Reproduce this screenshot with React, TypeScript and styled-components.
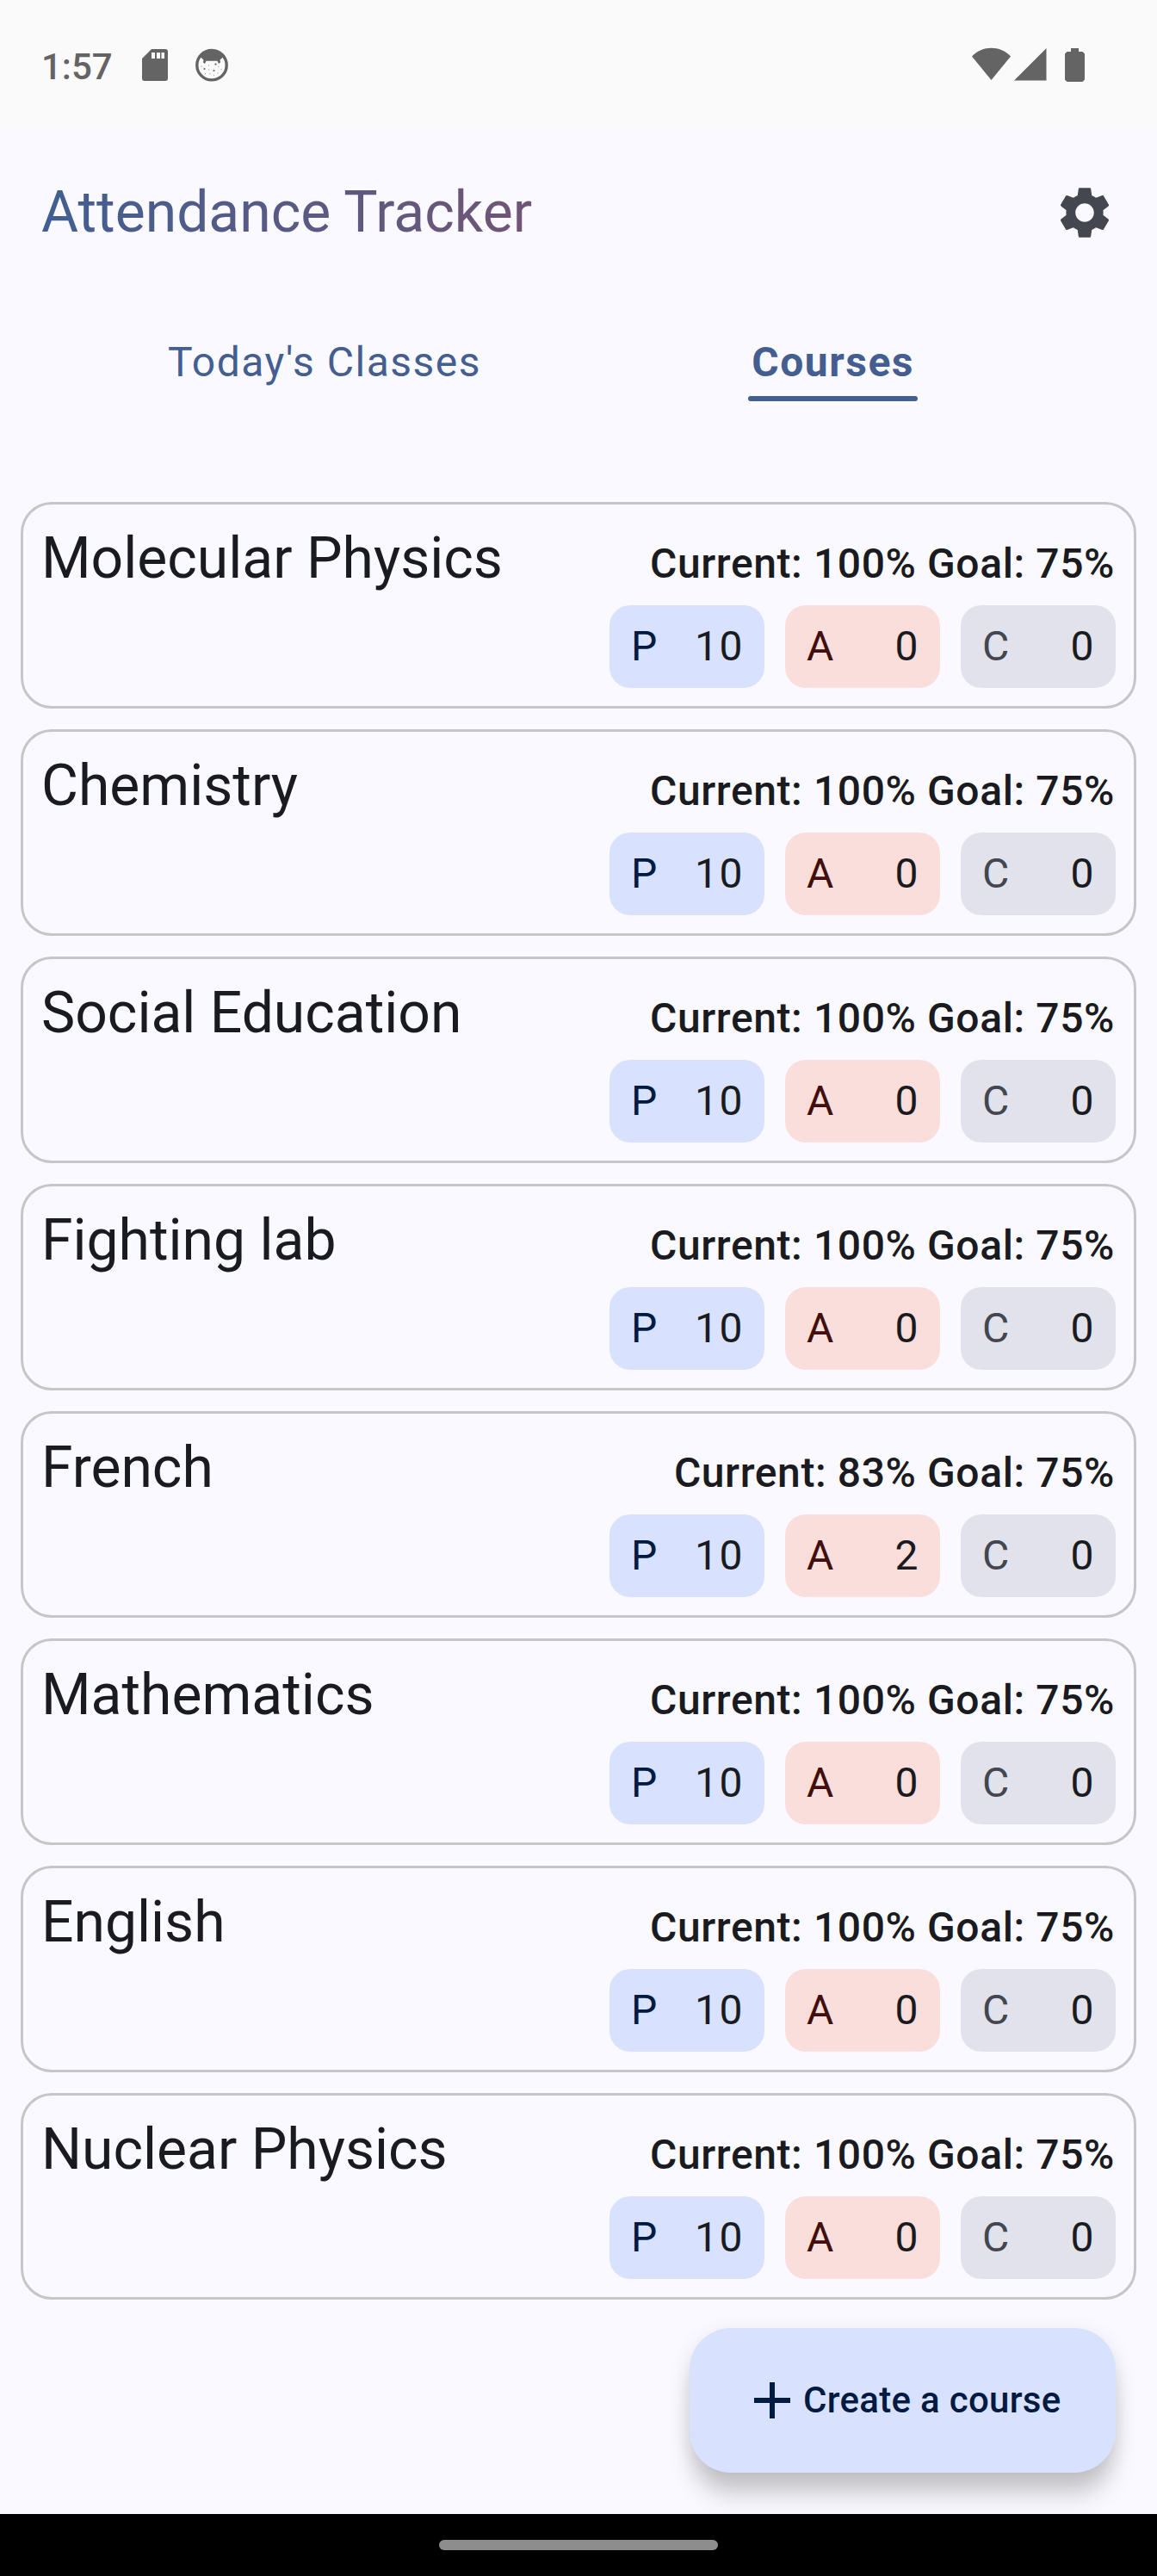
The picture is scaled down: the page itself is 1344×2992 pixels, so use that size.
import React from 'react';
import styled, { createGlobalStyle } from 'styled-components';
import { MdSettings } from 'react-icons/md';

const GlobalStyle = createGlobalStyle`
  * { box-sizing: border-box; }
  body {
    margin: 0;
    background: #faf9ff;
    font-family: Roboto, 'Noto Sans', sans-serif;
    color: #1a1b20;
  }
`;

const Screen = styled.div`
  width: 1344px;
  height: 2992px;
  display: flex;
  flex-direction: column;
  overflow: hidden;
  background: #faf9ff;
`;

const StatusBar = styled.div`
  height: 152px;
  flex: none;
  display: flex;
  align-items: flex-start;
  padding: 52px 84px 0 48px;
  background: #fafafa;
  color: #646464;
`;

const Clock = styled.span`
  width: 117px;
  font-size: 42px;
  line-height: 52px;
  font-weight: 500;
`;

const StatusIcon = styled.svg<{ $gap?: number }>`
  display: block;
  flex: none;
  height: 48px;
  margin-left: ${(p) => p.$gap ?? 0}px;
  fill: #646464;
`;

const Spacer = styled.div`
  flex: 1;
`;

const Header = styled.header`
  height: 190px;
  flex: none;
  display: flex;
  align-items: center;
  justify-content: space-between;
  padding: 0 48px;
`;

const AppTitle = styled.h1`
  margin: 0;
  font-size: 66px;
  line-height: 84px;
  font-weight: 400;
  background: linear-gradient(90deg, #415f91, #705575);
  -webkit-background-clip: text;
  background-clip: text;
  color: transparent;
`;

const SettingsButton = styled.button`
  padding: 0;
  border: 0;
  background: none;
  color: #44474f;
  font-size: 72px;
  line-height: 0;
`;

const Tabs = styled.nav`
  height: 241px;
  flex: none;
  display: flex;
  justify-content: space-between;
  align-items: flex-start;
  padding: 43px 278px 0 191px;
`;

const Tab = styled.div<{ $active?: boolean }>`
  display: flex;
  flex-direction: column;
  padding: 0 4px;
  height: 81px;
  font-size: 48px;
  line-height: 72px;
  letter-spacing: 1.5px;
  color: #445e91;
  font-weight: ${(p) => (p.$active ? 700 : 400)};
`;

const Indicator = styled.div`
  height: 6px;
  flex: none;
  margin: 3px -4px 0;
  border-radius: 3px;
  background: #445e91;
`;

const CourseList = styled.main`
  display: flex;
  flex-direction: column;
  gap: 24px;
  padding: 0 24px;
`;

const CourseCard = styled.article`
  height: 240px;
  display: flex;
  justify-content: space-between;
  padding: 21px 21px;
  border: 3px solid #c6c6c6;
  border-radius: 36px;
`;

const CourseName = styled.h2`
  margin: 0;
  font-size: 66px;
  line-height: 84px;
  font-weight: 400;
`;

const Summary = styled.div`
  display: flex;
  flex-direction: column;
  align-items: flex-end;
`;

const Attendance = styled.div`
  margin-top: 12px;
  padding-right: 1px;
  height: 84px;
  font-size: 48px;
  line-height: 72px;
  font-weight: 500;
  letter-spacing: 0.6px;
`;

const Chips = styled.div`
  display: flex;
  gap: 24px;
`;

const Chip = styled.div<{ $bg: string }>`
  width: 180px;
  height: 96px;
  display: flex;
  align-items: center;
  justify-content: space-between;
  padding: 0 24px 0 25px;
  border-radius: 24px;
  background: ${(p) => p.$bg};
  font-size: 48px;
  line-height: 72px;
  letter-spacing: 1.5px;
`;

const ChipLabel = styled.span<{ $color: string }>`
  color: ${(p) => p.$color};
`;

const Footer = styled.div`
  flex: 1;
  display: flex;
  justify-content: flex-end;
  align-items: flex-start;
  padding: 33px 48px 0;
`;

const CreateButton = styled.button`
  width: 495px;
  height: 168px;
  display: flex;
  align-items: center;
  justify-content: flex-start;
  gap: 12px;
  padding: 0 0 0 72px;
  border: 0;
  border-radius: 48px;
  background: #d8e2ff;
  color: #001a41;
  font-family: inherit;
  font-size: 42px;
  line-height: 60px;
  font-weight: 500;
  letter-spacing: 0.3px;
  box-shadow: 0 30px 28px -4px rgba(0, 0, 0, 0.18), 0 6px 24px rgba(0, 0, 0, 0.1);
`;

const PlusIcon = styled.svg`
  width: 48px;
  height: 48px;
  flex: none;
  fill: #001a41;
`;

const NavBar = styled.div`
  height: 72px;
  flex: none;
  display: flex;
  align-items: center;
  justify-content: center;
  background: #000;
  z-index: 1;
`;

const NavHandle = styled.div`
  width: 324px;
  height: 12px;
  border-radius: 6px;
  background: #8d8d8d;
`;

type Course = { name: string; current: number; goal: number; present: number; absent: number; cancelled: number };

const course = (name: string, current = 100, absent = 0): Course => ({
  name,
  current,
  goal: 75,
  present: 10,
  absent,
  cancelled: 0,
});

const courses: Course[] = [
  course('Molecular Physics'),
  course('Chemistry'),
  course('Social Education'),
  course('Fighting lab'),
  course('French', 83, 2),
  course('Mathematics'),
  course('English'),
  course('Nuclear Physics'),
];

function StatusIcons() {
  return (
    <>
      <StatusIcon width="30" viewBox="0 0 30 48">
        <path
          fillRule="evenodd"
          d="M11 5H27Q30 5 30 8V39Q30 42 27 42H3Q0 42 0 39V16ZM11 9V16H15V9ZM17 9V16H21V9ZM22.500 9V16H26V9Z"
        />
      </StatusIcon>
      <StatusIcon $gap={32} width="38" viewBox="5 0 38 48">
        <circle cx="24" cy="23.700" r="17.200" fill="none" stroke="#646464" strokeWidth="3.400" />
        <path d="M8.500 17Q12 6.500 24 6Q36 6.500 39.500 17L37 14.500L33.500 17.500L34 20.500L32 22L30.500 18.800H17.500L16 22L14 20.500L14.500 17.500L11 14.500Z" />
        <circle cx="15.500" cy="28" r="1.100" />
        <circle cx="28.500" cy="22.700" r="1.100" />
        <circle cx="26.500" cy="30" r="1.100" />
        <g opacity=".5">
          <circle cx="20.500" cy="24" r=".7" />
          <circle cx="35" cy="28.500" r=".7" />
          <circle cx="16.500" cy="33.500" r=".7" />
          <circle cx="22" cy="33.500" r=".7" />
          <circle cx="26.500" cy="35.500" r=".7" />
          <circle cx="31" cy="33" r=".7" />
          <circle cx="32" cy="25.500" r=".7" />
          <circle cx="12" cy="25" r=".7" />
          <circle cx="20.500" cy="29" r=".7" />
        </g>
      </StatusIcon>
      <Spacer />
      <StatusIcon width="45" viewBox="0 0 45 48">
        <path d="M0 13.500C12 .5 33 .5 45 13.500L22.500 41Z" />
      </StatusIcon>
      <StatusIcon $gap={4} width="38" viewBox="0 0 38 48">
        <path d="M0 41.500L37.500 4V41.500Z" />
      </StatusIcon>
      <StatusIcon $gap={21} width="23" viewBox="0 0 23 48">
        <path d="M7 4H16V8H20.500L23 10.500V40.500L20.500 43H2.500L0 40.500V10.500L2.500 8H7Z" />
      </StatusIcon>
    </>
  );
}

function CourseRow({ item }: { item: Course }) {
  return (
    <CourseCard>
      <CourseName>{item.name}</CourseName>
      <Summary>
        <Attendance>
          Current: {item.current}% Goal: {item.goal}%
        </Attendance>
        <Chips>
          <Chip $bg="#d8e2ff">
            <ChipLabel $color="#001a41">P</ChipLabel>
            <span>{item.present}</span>
          </Chip>
          <Chip $bg="#f9dedc">
            <ChipLabel $color="#410e0b">A</ChipLabel>
            <span>{item.absent}</span>
          </Chip>
          <Chip $bg="#e1e2ec">
            <ChipLabel $color="#44474f">C</ChipLabel>
            <span>{item.cancelled}</span>
          </Chip>
        </Chips>
      </Summary>
    </CourseCard>
  );
}

export default function App() {
  return (
    <Screen>
      <GlobalStyle />
      <StatusBar>
        <Clock>1:57</Clock>
        <StatusIcons />
      </StatusBar>
      <Header>
        <AppTitle>Attendance Tracker</AppTitle>
        <SettingsButton aria-label="Settings">
          <MdSettings />
        </SettingsButton>
      </Header>
      <Tabs>
        <Tab>Today's Classes</Tab>
        <Tab $active>
          Courses
          <Indicator />
        </Tab>
      </Tabs>
      <CourseList>
        {courses.map((item) => (
          <CourseRow key={item.name} item={item} />
        ))}
      </CourseList>
      <Footer>
        <CreateButton>
          <PlusIcon viewBox="0 0 48 48">
            <path d="M3 21H21V3H27V21H45V27H27V45H21V27H3Z" />
          </PlusIcon>
          Create a course
        </CreateButton>
      </Footer>
      <NavBar>
        <NavHandle />
      </NavBar>
    </Screen>
  );
}
